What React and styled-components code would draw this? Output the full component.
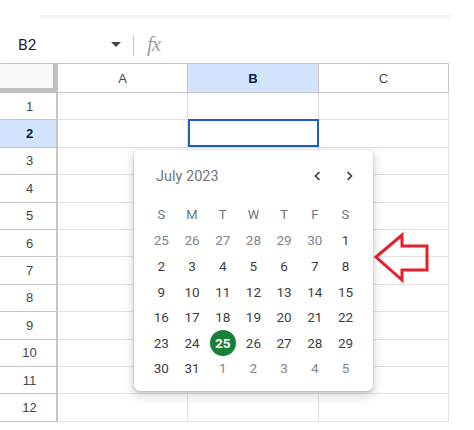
import React from 'react'
import styled, { createGlobalStyle } from 'styled-components'

const GlobalStyle = createGlobalStyle`
  html, body {
    margin: 0;
    padding: 0;
    background: #fff;
    overflow: hidden;
  }
  body {
    font-family: Arial, "Liberation Sans", sans-serif;
  }
`

const Page = styled.div`
  position: relative;
  width: 474px;
  height: 430px;
  overflow: hidden;
  background: #fff;
`

const TopStrip = styled.div`
  height: 30px;
  padding-top: 15px;
  box-sizing: border-box;
`

const StripLine = styled.div`
  margin-left: 40px;
  width: 410px;
  height: 3px;
  background: #f1f3f4;
`

const Toolbar = styled.div`
  display: flex;
  align-items: center;
  height: 33px;
  padding: 0 0 4px 18px;
  box-sizing: border-box;
`

const NameBox = styled.div`
  display: flex;
  align-items: center;
  width: 103px;
  font-family: Roboto, Arial, sans-serif;
  font-size: 15.5px;
  color: #1f1f1f;
`

const NameText = styled.span`
  flex: 1;
`

const Caret = styled.span`
  width: 0;
  height: 0;
  border-left: 5px solid transparent;
  border-right: 5px solid transparent;
  border-top: 5px solid #444746;
`

const Divider = styled.div`
  width: 1px;
  height: 20px;
  background: #c4c7c5;
  margin: 0 13px 0 12px;
`

const Fx = styled.span`
  font-family: "Liberation Serif", "Times New Roman", serif;
  font-style: italic;
  font-size: 21px;
  color: #9aa0a6;
  letter-spacing: -1px;
`

const Grid = styled.div`
  display: grid;
  grid-template-columns: 58px 130px 131px 130px;
  grid-template-rows: 30px repeat(12, 27.4px);
  width: 449px;
`

const Corner = styled.div`
  background: #f8f9fa;
  border-top: 1px solid #c4c7c5;
  border-right: 5px solid #c0c0c0;
  border-bottom: 5px solid #c0c0c0;
  box-sizing: border-box;
`

const ColHead = styled.div`
  display: flex;
  align-items: center;
  justify-content: center;
  box-sizing: border-box;
  border-top: 1px solid #c4c7c5;
  border-right: 1px solid #c4c7c5;
  border-bottom: 1px solid #c4c7c5;
  background: ${p => (p.$active ? '#d3e3fd' : '#fff')};
  color: ${p => (p.$active ? '#041e49' : '#444746')};
  font-weight: ${p => (p.$active ? 700 : 400)};
  font-size: 13px;
`

const RowHead = styled.div`
  display: flex;
  align-items: center;
  justify-content: center;
  box-sizing: border-box;
  padding-left: 3px;
  border-right: 2px solid #c4c7c5;
  border-bottom: 1px solid #c4c7c5;
  background: ${p => (p.$active ? '#d3e3fd' : '#fff')};
  color: ${p => (p.$active ? '#041e49' : '#444746')};
  font-weight: ${p => (p.$active ? 700 : 400)};
  font-size: 13px;
`

const Cell = styled.div`
  position: relative;
  box-sizing: border-box;
  border-right: 1px solid #e1e1e1;
  border-bottom: 1px solid #e1e1e1;

  ${p => p.$selected && `
    &::after {
      content: '';
      position: absolute;
      left: 0;
      top: -1px;
      right: -1px;
      bottom: 0;
      border: 2px solid #1f5bcc;
    }
  `}
`

const Popup = styled.div`
  position: absolute;
  left: 134px;
  top: 150px;
  width: 239px;
  height: 241px;
  box-sizing: border-box;
  background: #fff;
  border-radius: 6px;
  box-shadow: 0 1px 3px rgba(60, 64, 67, 0.3), 0 4px 8px 3px rgba(60, 64, 67, 0.15);
  font-family: Roboto, Arial, sans-serif;
  padding: 0 9px 0 12px;
`

const PopupHead = styled.div`
  display: flex;
  align-items: center;
  height: 52px;
`

const Month = styled.div`
  flex: 1;
  padding-left: 10px;
  font-size: 14.5px;
  color: #70757a;
`

const NavButton = styled.div`
  display: flex;
  align-items: center;
  justify-content: center;
  width: 31px;
  height: 28px;
  color: #3c4043;
`

const Days = styled.div`
  display: grid;
  grid-template-columns: repeat(7, 30.7px);
  grid-auto-rows: 25.6px;
`

const Day = styled.div`
  display: flex;
  align-items: center;
  justify-content: center;
  font-size: 13.5px;
  color: ${p => (p.$muted ? '#80868b' : '#3c4043')};
`

const Weekday = styled(Day)`
  color: #70757a;
  font-size: 13px;
`

const Today = styled.span`
  display: flex;
  align-items: center;
  justify-content: center;
  width: 26px;
  height: 26px;
  border-radius: 50%;
  background: #188038;
  color: #fff;
  font-weight: 700;
`

const Arrow = styled.svg`
  position: absolute;
  left: 370px;
  top: 228px;
`

const Chevron = ({ dir }) => (
  <svg width="12" height="12" viewBox="0 0 12 12">
    <path
      d={dir === 'left' ? 'M7.5 2 L3.5 6 L7.5 10' : 'M4.5 2 L8.5 6 L4.5 10'}
      fill="none"
      stroke="currentColor"
      strokeWidth="1.7"
    />
  </svg>
)

const weekdays = ['S', 'M', 'T', 'W', 'T', 'F', 'S']

const days = [
  ...[25, 26, 27, 28, 29, 30].map(n => ({ n, muted: true })),
  ...Array.from({ length: 31 }, (_, i) => ({ n: i + 1 })),
  ...[1, 2, 3, 4, 5].map(n => ({ n, muted: true })),
]

const rows = Array.from({ length: 12 }, (_, i) => i + 1)

export default function App() {
  return (
    <Page>
      <GlobalStyle />
      <TopStrip>
        <StripLine />
      </TopStrip>
      <Toolbar>
        <NameBox>
          <NameText>B2</NameText>
          <Caret />
        </NameBox>
        <Divider />
        <Fx>fx</Fx>
      </Toolbar>
      <Grid>
        <Corner />
        <ColHead>A</ColHead>
        <ColHead $active>B</ColHead>
        <ColHead>C</ColHead>
        {rows.map(r => (
          <React.Fragment key={r}>
            <RowHead $active={r === 2}>{r}</RowHead>
            <Cell />
            <Cell $selected={r === 2} />
            <Cell />
          </React.Fragment>
        ))}
      </Grid>

      <Popup>
        <PopupHead>
          <Month>July 2023</Month>
          <NavButton><Chevron dir="left" /></NavButton>
          <NavButton><Chevron dir="right" /></NavButton>
        </PopupHead>
        <Days>
          {weekdays.map((w, i) => (
            <Weekday key={i}>{w}</Weekday>
          ))}
          {days.map((d, i) => (
            <Day key={i} $muted={d.muted}>
              {!d.muted && d.n === 25 ? <Today>25</Today> : d.n}
            </Day>
          ))}
        </Days>
      </Popup>

      <Arrow width="62" height="58" viewBox="370 228 62 58">
        <path
          d="M376 257 L402 235 L402 246 L427 246 L427 270 L402 270 L402 280 Z"
          fill="none"
          stroke="#e3202b"
          strokeWidth="3"
          strokeLinejoin="miter"
        />
      </Arrow>
    </Page>
  )
}
